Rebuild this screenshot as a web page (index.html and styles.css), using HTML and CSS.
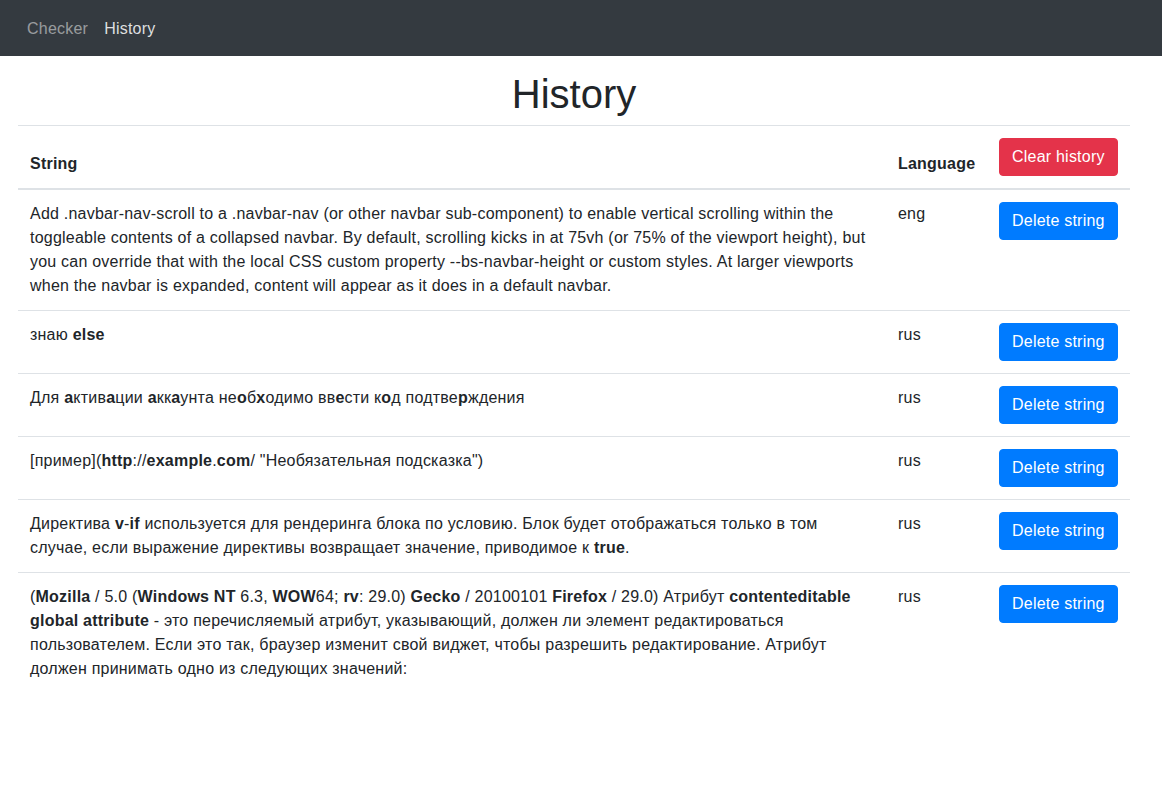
FILE: index.html
```html
<!DOCTYPE html>
<html lang="ru">
<head>
<meta charset="utf-8">
<title>History</title>
<link rel="stylesheet" href="styles.css">
</head>
<body>
<nav class="navbar">
  <a class="nav-link" href="#">Checker</a>
  <a class="nav-link active" href="#">History</a>
</nav>
<main class="container">
  <h1 class="title">History</h1>
  <table class="table">
    <colgroup>
      <col class="col-string">
      <col class="col-lang">
      <col class="col-action">
    </colgroup>
    <thead>
      <tr>
        <th>String</th>
        <th>Language</th>
        <th><button class="btn btn-danger">Clear history</button></th>
      </tr>
    </thead>
    <tbody>
      <tr>
        <td>Add .navbar-nav-scroll to a .navbar-nav (or other navbar sub-component) to enable vertical scrolling within the toggleable contents of a collapsed navbar. By default, scrolling kicks in at 75vh (or 75% of the viewport height), but you can override that with the local CSS custom property --bs-navbar-height or custom styles. At larger viewports when the navbar is expanded, content will appear as it does in a default navbar.</td>
        <td>eng</td>
        <td><button class="btn btn-primary">Delete string</button></td>
      </tr>
      <tr>
        <td>знаю <b>else</b></td>
        <td>rus</td>
        <td><button class="btn btn-primary">Delete string</button></td>
      </tr>
      <tr>
        <td>Для <b>a</b>ктив<b>a</b>ции <b>a</b>кк<b>a</b>унта не<b>o</b>б<b>x</b>одимо вв<b>e</b>сти к<b>o</b>д подтве<b>p</b>ждения</td>
        <td>rus</td>
        <td><button class="btn btn-primary">Delete string</button></td>
      </tr>
      <tr>
        <td>[пример](<b>http</b>://<b>example</b>.<b>com</b>/ "Необязательная подсказка")</td>
        <td>rus</td>
        <td><button class="btn btn-primary">Delete string</button></td>
      </tr>
      <tr>
        <td>Директива <b>v</b>-<b>if</b> используется для рендеринга блока по условию. Блок будет отображаться только в том случае, если выражение директивы возвращает значение, приводимое к <b>true</b>.</td>
        <td>rus</td>
        <td><button class="btn btn-primary">Delete string</button></td>
      </tr>
      <tr>
        <td>(<b>Mozilla</b> / 5.0 (<b>Windows NT</b> 6.3, <b>WOW</b>64; <b>rv</b>: 29.0) <b>Gecko</b> / 20100101 <b>Firefox</b> / 29.0) Атрибут <b>contenteditable global attribute</b> - это перечисляемый атрибут, указывающий, должен ли элемент редактироваться пользователем. Если это так, браузер изменит свой виджет, чтобы разрешить редактирование. Атрибут должен принимать одно из следующих значений:</td>
        <td>rus</td>
        <td><button class="btn btn-primary">Delete string</button></td>
      </tr>
    </tbody>
  </table>
</main>
</body>
</html>
```

FILE: styles.css
```css
* { box-sizing: border-box; }

html, body {
  margin: 0;
  padding: 0;
}

body {
  font-family: "Liberation Sans", Arial, sans-serif;
  font-size: 16px;
  line-height: 1.5;
  letter-spacing: 0.22px;
  color: #212529;
  background: #fff;
}

.navbar {
  display: flex;
  align-items: center;
  height: 56px;
  padding: 9px 19px 7px;
  background: #343a40;
}

.nav-link {
  display: block;
  padding: 8px;
  color: rgba(255, 255, 255, 0.5);
  text-decoration: none;
}

.nav-link.active {
  color: rgba(255, 255, 255, 0.85);
}

.container {
  width: 1112px;
  margin: 0 0 0 18px;
}

.title {
  margin: 14px 0 7px;
  font-size: 40px;
  font-weight: 500;
  line-height: 1.2;
  letter-spacing: 0;
  text-align: center;
}

.table {
  width: 100%;
  border-collapse: collapse;
  table-layout: fixed;
}

.col-string { width: 868px; }
.col-lang { width: 101px; }
.col-action { width: 143px; }

.table th,
.table td {
  padding: 12px;
  border-top: 1px solid #dee2e6;
  vertical-align: top;
  text-align: left;
}

.table thead th {
  vertical-align: bottom;
  border-bottom: 2px solid #dee2e6;
  font-weight: 700;
}

.table b {
  font-weight: 700;
}

.btn {
  display: inline-block;
  padding: 6px 12px;
  border: 1px solid transparent;
  border-radius: 4px;
  font-family: inherit;
  font-size: 16px;
  line-height: 24px;
  letter-spacing: 0.22px;
  color: #fff;
  white-space: nowrap;
  cursor: pointer;
}

.btn-primary {
  background: #007bff;
  border-color: #007bff;
}

.btn-danger {
  background: #e4334a;
  border-color: #e4334a;
}
```
